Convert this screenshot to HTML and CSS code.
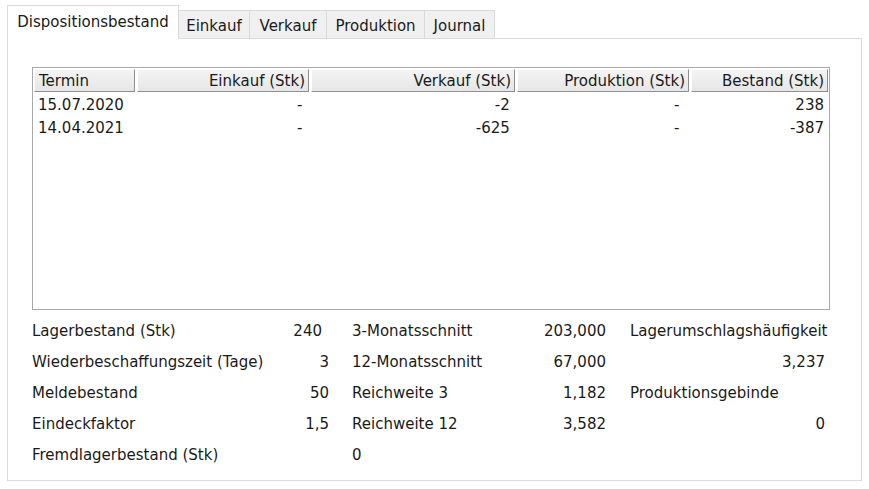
FILE: index.html
```html
<!DOCTYPE html>
<html lang="de">
<head>
<meta charset="utf-8">
<title>Dispositionsbestand</title>
<link rel="stylesheet" href="styles.css">
</head>
<body>
<div class="window">
  <div class="tabs">
    <div class="tab active">Dispositionsbestand</div>
    <div class="tab t-einkauf">Einkauf</div>
    <div class="tab t-verkauf">Verkauf</div>
    <div class="tab t-prod">Produktion</div>
    <div class="tab t-journal">Journal</div>
  </div>
  <div class="panel">
    <div class="list">
      <div class="head">
        <div class="hc c-termin left">Termin</div>
        <div class="hc c-ek">Einkauf (Stk)</div>
        <div class="hc c-vk">Verkauf (Stk)</div>
        <div class="hc c-pr">Produktion (Stk)</div>
        <div class="hc c-be">Bestand (Stk)</div>
      </div>
      <div class="row">
        <div class="cell c-termin left">15.07.2020</div>
        <div class="cell c-ek">-</div>
        <div class="cell c-vk">-2</div>
        <div class="cell c-pr">-</div>
        <div class="cell c-be">238</div>
      </div>
      <div class="row">
        <div class="cell c-termin left">14.04.2021</div>
        <div class="cell c-ek">-</div>
        <div class="cell c-vk">-625</div>
        <div class="cell c-pr">-</div>
        <div class="cell c-be">-387</div>
      </div>
    </div>
    <div class="stats">
      <div class="s lab1">Lagerbestand (Stk)</div>
      <div class="s val1 shift">240</div>
      <div class="s lab2">3-Monatsschnitt</div>
      <div class="s val2">203,000</div>
      <div class="s lab3">Lagerumschlagshäufigkeit</div>

      <div class="s lab1">Wiederbeschaffungszeit (Tage)</div>
      <div class="s val1">3</div>
      <div class="s lab2">12-Monatsschnitt</div>
      <div class="s val2">67,000</div>
      <div class="s lab3 num">3,237</div>

      <div class="s lab1">Meldebestand</div>
      <div class="s val1">50</div>
      <div class="s lab2">Reichweite 3</div>
      <div class="s val2">1,182</div>
      <div class="s lab3">Produktionsgebinde</div>

      <div class="s lab1">Eindeckfaktor</div>
      <div class="s val1">1,5</div>
      <div class="s lab2">Reichweite 12</div>
      <div class="s val2">3,582</div>
      <div class="s lab3 num">0</div>

      <div class="s lab1">Fremdlagerbestand (Stk)</div>
      <div class="s val1"></div>
      <div class="s lab2">0</div>
      <div class="s val2"></div>
      <div class="s lab3"></div>
    </div>
  </div>
</div>
</body>
</html>
```
FILE: styles.css
```css
html, body {
  margin: 0;
  padding: 0;
  background: #ffffff;
}
body {
  font-family: "DejaVu Sans", sans-serif;
  font-size: 15px;
  color: #1a1a1a;
}
.window {
  padding: 5px 0 0 7px;
  width: 855px;
}
.tabs {
  display: flex;
  align-items: flex-end;
  height: 33px;
  position: relative;
  z-index: 1;
}
.tab {
  box-sizing: border-box;
  height: 28px;
  border: 1px solid #d9d9d9;
  border-bottom: none;
  border-left: none;
  background: #f0f0f0;
  display: flex;
  align-items: center;
  justify-content: center;
  padding-top: 2px;
  white-space: nowrap;
}
.tab.active {
  height: 34px;
  margin-bottom: -1px;
  background: #ffffff;
  border-left: 1px solid #d9d9d9;
  width: 172px;
  padding-top: 0;
  padding-bottom: 1px;
}
.t-einkauf { width: 71px; }
.t-verkauf { width: 77px; }
.t-prod { width: 98px; }
.t-journal { width: 70px; }

.panel {
  box-sizing: border-box;
  height: 443px;
  border: 1px solid #dadada;
  background: #ffffff;
  padding: 28px 0 0 24px;
}
.list {
  box-sizing: border-box;
  width: 798px;
  height: 243px;
  border: 1px solid #a9a9a9;
  padding: 1px;
}
.head, .row {
  display: flex;
}
.head {
  height: 23px;
}
.hc {
  box-sizing: border-box;
  height: 23px;
  background: linear-gradient(#f4f4f4, #e6e6e6);
  border-top: 1px solid #ffffff;
  border-left: 1px solid #ffffff;
  border-right: 1px solid #8e8e8e;
  border-bottom: 1px solid #8e8e8e;
  margin-right: 2px;
  display: flex;
  align-items: center;
  justify-content: flex-end;
  padding: 1px 3px 0 4px;
  white-space: nowrap;
}
.hc.left, .cell.left { justify-content: flex-start; }
.c-termin { width: 101px; }
.c-ek { width: 172px; }
.c-vk { width: 204px; }
.c-pr { width: 172px; }
.c-be { width: 137px; margin-right: 0; }
.row { height: 23px; }
.cell {
  box-sizing: border-box;
  height: 23px;
  display: flex;
  align-items: center;
  justify-content: flex-end;
  padding: 2px 4px 0 4px;
  margin-right: 2px;
}
.cell.c-ek { padding-right: 6px; }
.cell.c-pr { padding-right: 8px; }
.cell.c-be { padding-right: 2px; }

.stats {
  display: grid;
  grid-template-columns: 238px 59px 191px 86px 219px;
  grid-auto-rows: 31px;
  margin-top: 5px;
}
.s {
  display: flex;
  align-items: center;
  white-space: nowrap;
}
.val1, .val2 { justify-content: flex-end; }
.val1.shift { padding-right: 7px; }
.lab2 { padding-left: 23px; }
.lab3 { padding-left: 24px; }
.lab3.num { justify-content: flex-end; }
```
